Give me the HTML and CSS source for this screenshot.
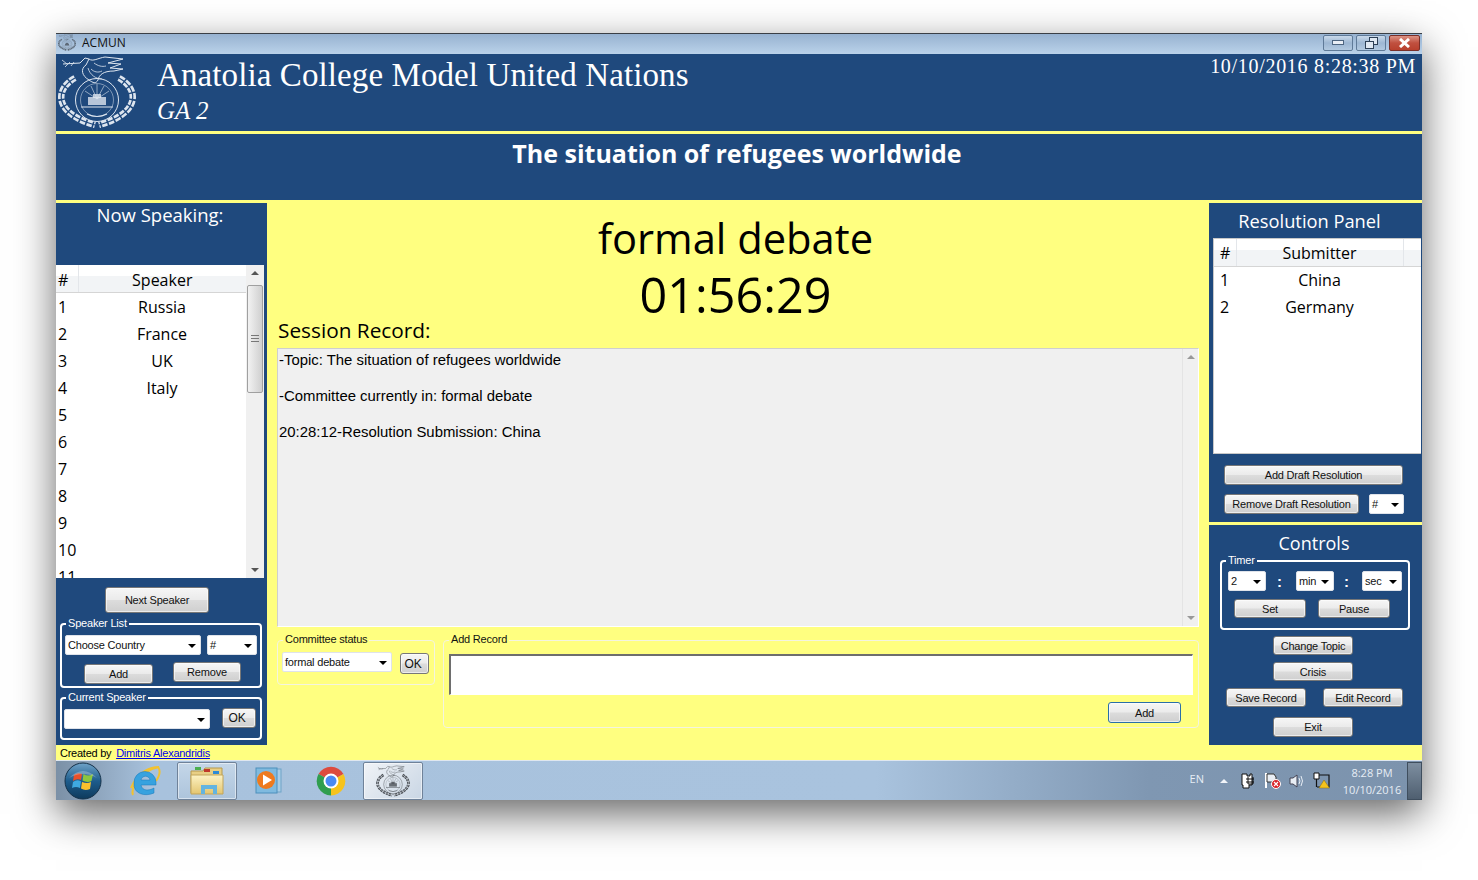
FILE: index.html
```html
<!DOCTYPE html>
<html lang="en">
<head>
  <meta charset="UTF-8">
  <title>ACMUN</title>
  <link rel="stylesheet" href="styles.css">
</head>
<body>

  <svg class="defs" width="0" height="0">
    <symbol id="crest" viewBox="0 0 78 74">
      <g fill="none" stroke="currentColor">
        <!-- wreath -->
        <path d="M17 23C-3 34 -5 58 37 70" stroke-width="6.500" stroke-dasharray="5.500 1.500"/>
        <path d="M17 23C-3 34 -5 58 37 70" stroke-width="1.200" stroke="var(--wreath-gap, #1f497d)"/>
        <g transform="translate(78 0) scale(-1 1)">
          <path d="M17 23C-3 34 -5 58 37 70" stroke-width="6.500" stroke-dasharray="5.500 1.500"/>
          <path d="M17 23C-3 34 -5 58 37 70" stroke-width="1.200" stroke="var(--wreath-gap, #1f497d)"/>
        </g>
        <!-- seal -->
        <circle cx="39" cy="45" r="21.500" stroke-width="1"/>
        <circle cx="39" cy="45" r="16.500" stroke-width=".5"/>
        <path d="M39 44L27 36M39 44L33 31M39 44V29M39 44L46 31M39 44L51 36" stroke-width=".6"/>
        <path d="M23 52H55M29 59Q39 64 49 59" stroke-width="1.200"/>
        <!-- dove -->
        <path d="M5 9L22 8L27 3L31 4L28 10C22 14 24 21 31 25C35 28 38 29 40 25C41 20 45 16 56 16L65 14L52 13L63 9L50 8L65 4L47 2C40 3 35 7 31 4" stroke-width="1"/>
        <path d="M4 5L9 9M7 12L12 7M13 11L16 7M30 13C32 20 38 24 44 24M36 8C40 11 44 12 48 11M33 14C36 17 40 18 44 16" stroke-width=".8"/>
      </g>
      <rect x="30" y="42" width="18" height="8" fill="currentColor" opacity=".8"/>
      <rect x="35" y="39" width="8" height="4" fill="currentColor" opacity=".8"/>
    </symbol>
    <linearGradient id="orb" x1="0" y1="0" x2="0" y2="1">
      <stop offset="0" stop-color="#6fa3c8"/>
      <stop offset=".5" stop-color="#1d5c8c"/>
      <stop offset="1" stop-color="#0e3a5c"/>
    </linearGradient>
    <linearGradient id="folder" x1="0" y1="0" x2="0" y2="1">
      <stop offset="0" stop-color="#fdf3c4"/>
      <stop offset="1" stop-color="#e3c570"/>
    </linearGradient>
  </svg>

  <div class="window">

    <div class="titlebar">
      <svg class="title-icon" width="18" height="17"><use href="#crest"/></svg>
      <span class="title-text">ACMUN</span>
      <div class="window-controls">
        <div class="win-btn">
          <svg width="12" height="6"><rect x=".5" y=".5" width="11" height="4" fill="#e9eef5" stroke="#4d6580"/></svg>
        </div>
        <div class="win-btn">
          <svg width="13" height="12" fill="#dfe8f2" stroke="#2c3f55"><rect x="4.500" y=".5" width="8" height="7"/><rect x=".5" y="4.500" width="8" height="7"/></svg>
        </div>
        <div class="win-btn win-close">
          <svg width="13" height="10"><path d="M2 1L11 9M11 1L2 9" stroke="#fff" stroke-width="3"/></svg>
        </div>
      </div>
    </div>

    <header class="header">
      <svg class="crest" width="78" height="74"><use href="#crest"/></svg>
      <div class="header-titles">
        <h1>Anatolia College Model United Nations</h1>
        <h2>GA 2</h2>
      </div>
      <div class="clock">10/10/2016 8:28:38 PM</div>
    </header>

    <div class="topic">The situation of refugees worldwide</div>

    <main class="content">

      <!-- left column -->
      <section class="left">
        <h3 class="left-title">Now Speaking:</h3>
        <div class="list speakers">
          <table>
            <thead><tr><th class="num">#</th><th>Speaker</th></tr></thead>
            <tbody>
              <tr><td class="num">1</td><td>Russia</td></tr>
              <tr><td class="num">2</td><td>France</td></tr>
              <tr><td class="num">3</td><td>UK</td></tr>
              <tr><td class="num">4</td><td>Italy</td></tr>
              <tr><td class="num">5</td><td></td></tr>
              <tr><td class="num">6</td><td></td></tr>
              <tr><td class="num">7</td><td></td></tr>
              <tr><td class="num">8</td><td></td></tr>
              <tr><td class="num">9</td><td></td></tr>
              <tr><td class="num">10</td><td></td></tr>
              <tr><td class="num">11</td><td></td></tr>
            </tbody>
          </table>
          <div class="scrollbar">
            <span class="arrow-up"></span>
            <span class="thumb"></span>
            <span class="arrow-down"></span>
          </div>
        </div>
        <button class="btn next-speaker">Next Speaker</button>

        <div class="group speaker-list">
          <span class="group-label">Speaker List</span>
          <div class="row">
            <div class="combo w136">Choose Country</div>
            <div class="combo w50">#</div>
          </div>
          <div class="row row-buttons">
            <button class="btn add-speaker">Add</button>
            <button class="btn remove-speaker">Remove</button>
          </div>
        </div>

        <div class="group current-speaker">
          <span class="group-label">Current Speaker</span>
          <div class="row">
            <div class="combo w146"></div>
            <button class="btn ok-speaker">OK</button>
          </div>
        </div>
      </section>

      <!-- center column -->
      <section class="center">
        <div class="status">formal debate</div>
        <div class="status status-timer">01:56:29</div>
        <h3 class="session-title">Session Record:</h3>
        <div class="record">
          <div class="record-text">
            <p>-Topic: The situation of refugees worldwide</p>
            <p>-Committee currently in: formal debate</p>
            <p>20:28:12-Resolution Submission: China</p>
          </div>
          <div class="scrollbar scrollbar-plain">
            <span class="arrow-up"></span>
            <span class="arrow-down"></span>
          </div>
        </div>
        <div class="center-bottom">
          <div class="group group-light committee">
            <span class="group-label">Committee status</span>
            <div class="combo w108">formal debate</div>
            <button class="btn ok-status">OK</button>
          </div>
          <div class="group group-light add-record">
            <span class="group-label">Add Record</span>
            <div class="record-input"></div>
            <button class="btn btn-default">Add</button>
          </div>
        </div>
      </section>

      <!-- right column -->
      <section class="right">
        <div class="panel resolutions">
          <h3 class="panel-title resolutions-title">Resolution Panel</h3>
          <div class="list submitters">
            <table>
              <thead><tr><th class="num">#</th><th>Submitter</th><th class="end"></th></tr></thead>
              <tbody>
                <tr><td class="num">1</td><td>China</td><td></td></tr>
                <tr><td class="num">2</td><td>Germany</td><td></td></tr>
              </tbody>
            </table>
          </div>
          <button class="btn add-draft">Add Draft Resolution</button>
          <div class="row remove-row">
            <button class="btn remove-draft">Remove Draft Resolution</button>
            <div class="combo w35">#</div>
          </div>
        </div>

        <div class="panel controls">
          <h3 class="panel-title controls-title">Controls</h3>
          <div class="group timer">
            <span class="group-label">Timer</span>
            <div class="row timer-row">
              <div class="combo w38">2</div>
              <span class="colon">:</span>
              <div class="combo w38">min</div>
              <span class="colon">:</span>
              <div class="combo w40">sec</div>
            </div>
            <div class="row timer-buttons">
              <button class="btn w72">Set</button>
              <button class="btn w72">Pause</button>
            </div>
          </div>
          <button class="btn wide change-topic">Change Topic</button>
          <button class="btn wide crisis">Crisis</button>
          <div class="row record-buttons">
            <button class="btn w80">Save Record</button>
            <button class="btn w80">Edit Record</button>
          </div>
          <button class="btn wide exit">Exit</button>
        </div>
      </section>
    </main>

    <div class="credit">Created by <a href="#">Dimitris Alexandridis</a></div>

    <footer class="taskbar">
      <div class="start">
        <svg width="38" height="38" viewBox="0 0 38 38">
          <circle cx="19" cy="19" r="18" fill="url(#orb)" stroke="#16324a"/>
          <path d="M10 13Q14 10 18 12L17 18Q13 16 9 19Z" fill="#e8502a"/>
          <path d="M19.500 12Q24 15 29 12L27.500 19Q23 21 18.500 18.500Z" fill="#8cc63f"/>
          <path d="M9 20Q13 17 17 19.500L16 26Q12 24 8 26Z" fill="#3fa9e0"/>
          <path d="M18 20Q23 22 27 20L26 27Q21 29 17 26.500Z" fill="#fbc02d"/>
          <path d="M5 16Q19 2 33 16Q19 8 5 16Z" fill="#fff" opacity=".25"/>
        </svg>
      </div>
      <div class="task">
        <svg width="34" height="34" viewBox="0 0 34 34">
          <path d="M5 31C2 26 11 7 31 3C24 3 10 6 3 24" fill="none" stroke="#f2c230" stroke-width="2"/>
          <path d="M30 3C34 8 30 14 28 17" fill="none" stroke="#f2c230" stroke-width="2"/>
          <path d="M6 19A11 11 0 0 1 28 18V21H13C14 27 21 27 26 24V29C17 33 5 30 6 19ZM13 16H22C21 11 14 11 13 16Z" fill="#37a2df" stroke="#1976b8" stroke-width=".5"/>
        </svg>
      </div>
      <div class="task task-open">
        <svg width="34" height="30" viewBox="0 0 34 30">
          <path d="M1 5H13L15 2H32V27H1Z" fill="#e8cf85" stroke="#b59a4e"/>
          <rect x="5" y="1" width="6" height="3" fill="#4caf50"/>
          <rect x="14" y="3" width="6" height="3" fill="#c0392b"/>
          <rect x="23" y="5" width="6" height="3" fill="#2e8bd6"/>
          <path d="M1 9H33V28H1Z" fill="url(#folder)" stroke="#c2a55a"/>
          <path d="M11 28V19H27V28H23V23H15V28Z" fill="#63b4e0"/>
        </svg>
      </div>
      <div class="task">
        <svg width="32" height="30" viewBox="0 0 32 30">
          <rect x="7" y="3" width="21" height="23" fill="#a9cde6" stroke="#6ea3c7"/>
          <rect x="3" y="2" width="21" height="25" fill="#7fbadf" stroke="#4c8fbc"/>
          <circle cx="13" cy="14" r="9" fill="#ee7a1e"/>
          <path d="M10 8.500L19 14L10 19.500Z" fill="#fff"/>
        </svg>
      </div>
      <div class="task">
        <svg width="30" height="30" viewBox="0 0 30 30">
          <path d="M15 15L2.500 8A14.500 14.500 0 0 1 27.500 8Z" fill="#dd4b3e"/>
          <path d="M15 15L27.500 8A14.500 14.500 0 0 1 15 29.500Z" fill="#f6c31c"/>
          <path d="M15 15V29.500A14.500 14.500 0 0 1 2.500 8Z" fill="#2f9e4f"/>
          <circle cx="15" cy="15" r="7.500" fill="#fff"/>
          <circle cx="15" cy="15" r="5.500" fill="#4a8af4"/>
        </svg>
      </div>
      <div class="task task-open task-active">
        <svg class="task-crest" width="34" height="32"><use href="#crest"/></svg>
      </div>

      <div class="tray">
        <span class="lang">EN</span>
        <span class="tray-arrow"></span>
        <svg class="tray-icon" width="16" height="17" viewBox="0 0 16 17">
          <path d="M2 2H7V4H10V2H12V13H9V16H3V13H2Z" fill="#fff" stroke="#111"/>
          <path d="M6 7H14M6 10H14M8 5V12H13V5" fill="none" stroke="#111"/>
        </svg>
        <svg class="tray-icon" width="17" height="17" viewBox="0 0 17 17">
          <path d="M2 1V16" stroke="#fff" stroke-width="2"/>
          <path d="M3 2H10L12 5V10H3Z" fill="#e8eef5" stroke="#333"/>
          <circle cx="12" cy="12" r="4.500" fill="#d8232a" stroke="#fff"/>
          <path d="M10 10L14 14M14 10L10 14" stroke="#fff" stroke-width="1.200"/>
        </svg>
        <svg class="tray-icon" width="16" height="16" viewBox="0 0 16 16">
          <path d="M1 5H4L8 2V14L4 11H1Z" fill="#e8eef5" stroke="#445"/>
          <path d="M10 5Q12 8 10 11M12 3Q15 8 12 13" fill="none" stroke="#e8eef5"/>
        </svg>
        <svg class="tray-icon" width="17" height="17" viewBox="0 0 17 17">
          <path d="M1 1H6V7H1Z" fill="#fff" stroke="#111"/>
          <path d="M3.500 7V15M6 3H16V15H4" fill="none" stroke="#111" stroke-width="1.200"/>
          <path d="M11 8L16.500 16H6Z" fill="#f6c31c" stroke="#8a6d0b" stroke-width=".5"/>
        </svg>
        <div class="tray-clock">
          <span>8:28 PM</span>
          <span>10/10/2016</span>
        </div>
      </div>
      <div class="show-desktop"></div>
    </footer>
  </div>

</body>
</html>
```

FILE: styles.css
```css
:root {
  --navy: #1f497d;
  --yellow: #ffff80;
  --sys-font: "Liberation Sans", Arial, sans-serif;
  --ui-font: "Open Sans", "Noto Sans", sans-serif;
  --serif-font: "Liberation Serif", serif;
}
*, *::before, *::after {
  box-sizing: border-box;
  margin: 0;
  padding: 0;
}
html, body {
  height: 100%;
  overflow: hidden;
}
body {
  background: #fff;
  padding: 33px 56px 0;
  font-family: var(--sys-font);
  color: #000;
}
.defs {
  position: absolute;
}
.window {
  width: 1366px;
  height: 767px;
  border-top: 1px solid #3a3f45;
  box-shadow: 0 14px 38px rgba(0, 0, 0, 0.6);
  display: flex;
  flex-direction: column;
}
.row {
  display: flex;
  align-items: flex-start;
}

/* title bar */
.titlebar {
  height: 20px;
  flex: none;
  display: flex;
  align-items: center;
  padding-left: 2px;
  background: linear-gradient(#97b2d0, #bad2ea);
}
.title-icon {
  color: #4c5560;
  margin-top: -3px;
  --wreath-gap: #a9c3de;
}
.title-text {
  margin-left: 6px;
  margin-top: -3px;
  font-family: var(--ui-font);
  font-size: 12px;
  color: #111;
}
.window-controls {
  margin-left: auto;
  margin-right: 2px;
  margin-top: -2px;
  display: flex;
  gap: 3px;
}
.win-btn {
  width: 30px;
  height: 16px;
  border: 1px solid #5f7a98;
  border-radius: 2px;
  display: flex;
  align-items: center;
  justify-content: center;
  background: linear-gradient(#c9d9ea, #9db7d3 50%, #b2c9e0);
}
.win-close {
  width: 31px;
  border-color: #7a2f28;
  background: linear-gradient(#dd9284, #c0503f 50%, #b8402e);
}

/* header */
.header {
  height: 77px;
  flex: none;
  background: var(--navy);
  color: #fff;
  display: flex;
  padding-left: 2px;
  padding-top: 1px;
}
.crest {
  color: #dde5ef;
  flex: none;
}
.header-titles {
  margin-left: 21px;
  font-family: var(--serif-font);
}
.header-titles h1 {
  font-size: 33px;
  font-weight: normal;
  letter-spacing: 0.1px;
  line-height: 38px;
  margin-top: 1px;
}
.header-titles h2 {
  font-size: 25px;
  font-weight: normal;
  font-style: italic;
  line-height: 34px;
}
.clock {
  margin-left: auto;
  margin-right: 6px;
  font-family: var(--serif-font);
  font-size: 20px;
  letter-spacing: 0.7px;
  line-height: 22px;
}
.topic {
  height: 69px;
  flex: none;
  background: var(--navy);
  border-top: 3px solid var(--yellow);
  color: #fff;
  font-family: var(--ui-font);
  font-weight: bold;
  font-size: 25px;
  line-height: 38px;
  text-align: center;
  padding-right: 4px;
}

/* main area */
.content {
  flex: none;
  height: 545px;
  padding-top: 3px;
  background: var(--yellow);
  display: flex;
}
.left {
  width: 211px;
  flex: none;
  background: var(--navy);
  padding-right: 3px;
  color: #fff;
}
.left-title {
  height: 62px;
  font-family: var(--ui-font);
  font-weight: normal;
  font-size: 18.500px;
  line-height: 24px;
  text-align: center;
}
.list {
  position: relative;
  background: #fff;
  color: #000;
  overflow: hidden;
}
.list table {
  width: 100%;
  table-layout: fixed;
  border-collapse: collapse;
  font-family: var(--ui-font);
  font-size: 16px;
}
.list th {
  height: 27px;
  padding-top: 2px;
  font-weight: normal;
  border-bottom: 1px solid #d5d5d5;
  border-left: 1px solid #e3e6ea;
  background: linear-gradient(#fff 40%, #f2f4f6 40%);
}
.list th.num {
  border-left: none;
}
.list td {
  height: 27px;
  text-align: center;
}
.list .num {
  width: 22px;
  text-align: left;
}
.speakers {
  height: 313px;
}
.speakers table {
  width: 190px;
}
.speakers th {
  padding-top: 4px;
}
.speakers td {
  padding-top: 2px;
}
.speakers .num {
  padding-left: 2px;
}
.submitters {
  width: 208px;
  height: 216px;
  margin-left: 4px;
  border: 1px solid #c8c8c8;
  border-right: none;
}
.submitters .num {
  padding-left: 6px;
}
.submitters .end {
  width: 18px;
}

/* scrollbars */
.scrollbar {
  position: absolute;
  top: 0;
  right: 0;
  bottom: 0;
  width: 18px;
  background: #f0f0f0;
  display: flex;
  flex-direction: column;
  align-items: center;
}
.arrow-up,
.arrow-down {
  flex: none;
  width: 0;
  height: 0;
  margin: 6px 0;
  border-left: 4px solid transparent;
  border-right: 4px solid transparent;
}
.arrow-up {
  border-bottom: 4px solid #555;
}
.arrow-down {
  margin-top: auto;
  border-top: 4px solid #555;
}
.thumb {
  position: relative;
  width: 16px;
  height: 108px;
  margin-top: 4px;
  border: 1px solid #a0a0a0;
  border-radius: 2px;
  background: linear-gradient(90deg, #f2f2f2, #cfcfcf);
}
.thumb::after {
  content: "";
  position: absolute;
  top: 49px;
  left: 3px;
  width: 8px;
  height: 7px;
  background: repeating-linear-gradient(#777 0 1px, transparent 1px 3px);
}
.scrollbar-plain {
  width: 16px;
  background: #f0f0f0;
  border-left: 1px solid #e4e4e4;
}
.scrollbar-plain .arrow-up {
  border-bottom-color: #999;
}
.scrollbar-plain .arrow-down {
  border-top-color: #999;
}

/* buttons and combos */
.btn {
  display: block;
  height: 20px;
  font-family: var(--sys-font);
  font-size: 11px;
  letter-spacing: -0.2px;
  color: #111;
  border: 1px solid #777;
  border-radius: 3px;
  background: linear-gradient(#f6f6f6, #ebebeb 48%, #dcdcdc 52%, #cfcfcf);
  box-shadow: inset 0 0 0 1px rgba(255, 255, 255, 0.6);
}
.btn-default {
  width: 73px;
  height: 21px;
  border-color: #2a6fa8;
  margin: 7px 17px 0 auto;
}
.combo {
  position: relative;
  flex: none;
  height: 20px;
  padding-left: 2px;
  background: #fff;
  border: 1px solid #dfe3ea;
  border-radius: 2px;
  color: #111;
  font-family: var(--sys-font);
  font-size: 11px;
  letter-spacing: -0.2px;
  line-height: 18px;
}
.combo::after {
  content: "";
  position: absolute;
  top: 8px;
  right: 4px;
  border-left: 4px solid transparent;
  border-right: 4px solid transparent;
  border-top: 4px solid #000;
}
.w35 { width: 35px; }
.w38 { width: 38px; }
.w40 { width: 40px; }
.w50 { width: 50px; }
.w108 { width: 110px; }
.w136 { width: 136px; }
.w146 { width: 146px; }
.w72 { width: 72px; height: 19px; }
.w80 { width: 80px; height: 19px; }
.wide { width: 80px; height: 19px; margin-left: 64px; }

/* group boxes */
.group {
  position: relative;
  border: 2px solid #fff;
  border-radius: 4px;
}
.group-label {
  position: absolute;
  top: -8px;
  left: 4px;
  padding: 0 2px;
  background: var(--navy);
  color: #fff;
  font-size: 11px;
  letter-spacing: -0.2px;
  line-height: 13px;
}
.next-speaker {
  width: 104px;
  height: 26px;
  margin: 9px 0 0 49px;
}
.speaker-list {
  width: 202px;
  height: 65px;
  margin: 10px 0 0 4px;
  padding: 10px 0 0 3px;
}
.speaker-list .row {
  gap: 6px;
}
.speaker-list .row-buttons {
  gap: 20px;
  margin: 7px 0 0 19px;
}
.add-speaker {
  width: 69px;
  height: 20px;
  margin-top: 2px;
}
.remove-speaker {
  width: 68px;
}
.current-speaker {
  width: 202px;
  height: 43px;
  margin: 9px 0 0 4px;
  padding: 10px 0 0 2px;
}
.current-speaker .row {
  gap: 12px;
}
.ok-speaker {
  width: 34px;
  padding-right: 4px;
  font-size: 12px;
  margin-top: -1px;
}

/* center column */
.center {
  flex: 1;
  padding: 6px 0 0 10px;
}
.status {
  width: 917px;
  font-family: var(--ui-font);
  font-size: 41.700px;
  line-height: 57px;
  text-align: center;
}
.status-timer {
  font-size: 48.500px;
}
.session-title {
  margin: -4px 0 7px 1px;
  font-family: var(--ui-font);
  font-weight: normal;
  font-size: 20.800px;
  line-height: 22px;
}
.record {
  position: relative;
  width: 922px;
  height: 279px;
  background: #f0f0f0;
  border: 1px solid #dcdcdc;
  border-color: #cfcfcf #fff #fff #cfcfcf;
  padding: 2px 0 0 1px;
  font-size: 14.900px;
  line-height: 18px;
}
.record p {
  margin-bottom: 18px;
}
.center-bottom {
  display: flex;
  align-items: flex-start;
  gap: 8px;
  margin-top: 13px;
}
.group-light {
  border: 1px solid #f4f4e0;
}
.group-light .group-label {
  background: var(--yellow);
  color: #111;
  left: 5px;
}
.committee {
  width: 158px;
  height: 45px;
  padding: 11px 0 0 4px;
  display: flex;
  align-items: flex-start;
  gap: 8px;
}
.ok-status {
  width: 29px;
  height: 21px;
  padding-right: 3px;
  font-size: 12px;
  margin-top: 1px;
}
.add-record {
  width: 756px;
  height: 88px;
  padding: 13px 0 0 5px;
}
.record-input {
  width: 744px;
  height: 41px;
  background: #fff;
  border: 1px solid #fff;
  border-top: 2px solid #6e6e6e;
  border-left: 2px solid #6e6e6e;
}

/* right column */
.right {
  width: 213px;
  flex: none;
  display: flex;
  flex-direction: column;
  gap: 3px;
}
.panel {
  background: var(--navy);
  color: #fff;
}
.resolutions {
  height: 319px;
}
.controls {
  height: 220px;
}
.panel-title {
  height: 35px;
  font-family: var(--ui-font);
  font-weight: normal;
  font-size: 18px;
  line-height: 36px;
  text-align: center;
}
.resolutions-title {
  width: 201px;
  font-size: 18.300px;
}
.add-draft {
  width: 179px;
  margin: 11px 0 0 15px;
}
.remove-row {
  margin: 9px 0 0 15px;
  gap: 10px;
}
.remove-draft {
  width: 135px;
}
.controls-title {
  width: 210px;
}
.timer {
  width: 190px;
  height: 70px;
  margin: 0 0 0 11px;
  padding: 9px 0 0 6px;
}
.timer-row {
  align-items: center;
}
.colon {
  width: 30px;
  padding-right: 3px;
  text-align: center;
  font-size: 15px;
  font-weight: bold;
}
.timer-row .colon + .combo + .colon {
  width: 28px;
}
.timer-buttons {
  gap: 12px;
  margin: 8px 0 0 6px;
}
.change-topic {
  margin-top: 6px;
}
.crisis {
  margin-top: 7px;
}
.record-buttons {
  margin: 7px 0 0 17px;
  gap: 17px;
}
.exit {
  margin-top: 10px;
  height: 20px;
}

/* credit line */
.credit {
  height: 15px;
  flex: none;
  background: var(--yellow);
  padding-left: 4px;
  font-size: 11px;
  letter-spacing: -0.25px;
  line-height: 16px;
}
.credit a {
  margin-left: 2px;
  color: #0000ee;
}

/* taskbar */
.taskbar {
  flex: 1;
  display: flex;
  align-items: center;
  border-top: 1px solid #dfe7f0;
  background: linear-gradient(90deg, #7b90a6 0, #a8c2dd 7%, #a9c3de 60%, #7f97b2 80%, #7c93ad 100%);
}
.start {
  width: 58px;
  padding-right: 4px;
  display: flex;
  justify-content: center;
}
.task {
  width: 62px;
  height: 38px;
  display: flex;
  align-items: center;
  justify-content: center;
}
.task-open {
  width: 60px;
  margin: 0 1px;
  border: 1px solid #6f8299;
  border-radius: 2px;
  background: linear-gradient(#c4d6e8, #adc4dc);
  box-shadow: inset 0 0 0 1px rgba(255, 255, 255, 0.5);
}
.task-active {
  background: linear-gradient(135deg, #f0f3f7, #c9d6e4);
}
.task-crest {
  color: #4a4f55;
  --wreath-gap: #dfe6ee;
}
.tray {
  margin-left: auto;
  display: flex;
  align-items: center;
  color: #e6edf5;
}
.lang {
  font-family: var(--ui-font);
  font-size: 11px;
  margin-top: -4px;
}
.tray-arrow {
  margin: 0 0 0 16px;
  border-left: 4px solid transparent;
  border-right: 4px solid transparent;
  border-bottom: 4px solid #f2f5f9;
}
.tray-icon {
  margin-left: 8px;
}
.tray-arrow + .tray-icon {
  margin-left: 12px;
}
.tray-clock {
  width: 70px;
  margin-left: 7px;
  display: flex;
  flex-direction: column;
  align-items: center;
  font-family: var(--ui-font);
  font-size: 11px;
  line-height: 17px;
}
.show-desktop {
  width: 15px;
  height: 38px;
  border: 1px solid #3f4e5e;
  background: linear-gradient(#7d8ea0, #4f5f70);
}
```
